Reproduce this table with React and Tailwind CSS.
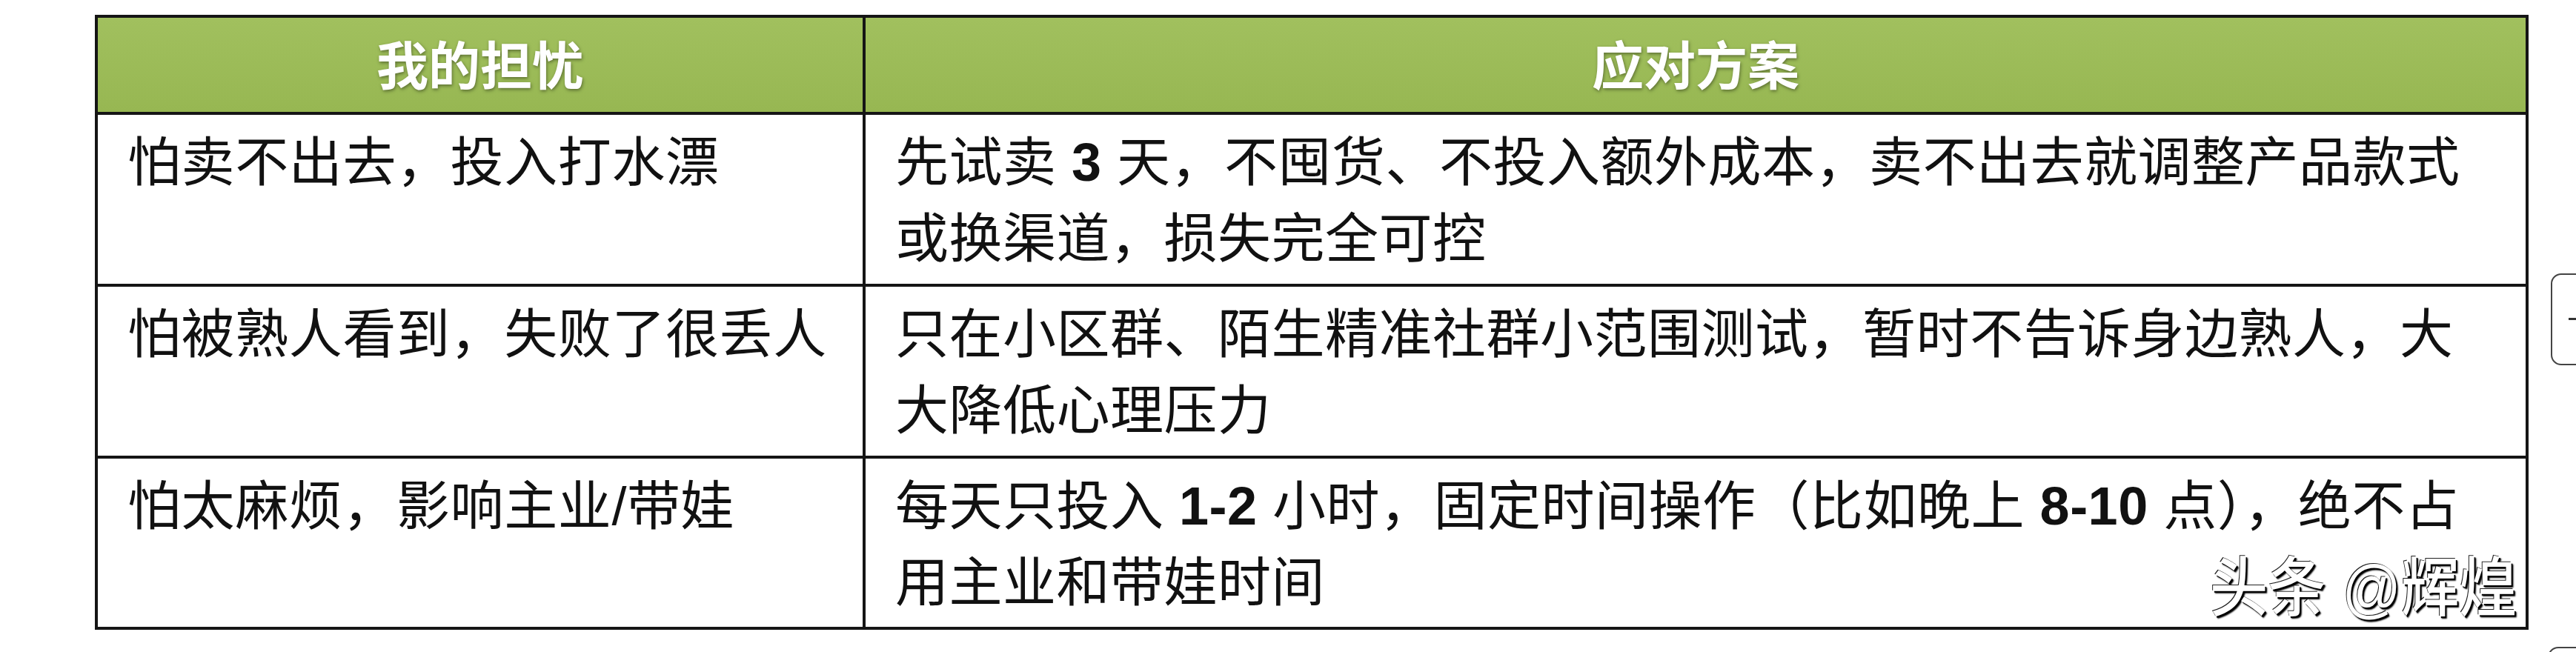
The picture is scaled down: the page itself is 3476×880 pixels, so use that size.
import React from "react";

const ROWS = [
  {
    worry: "怕卖不出去，投入打水漂",
    answer: [
      ["先试卖 ", <b key="a">3</b>, " 天，不囤货、不投入额外成本，卖不出去就调整产品款式"],
      ["或换渠道，损失完全可控"],
    ],
  },
  {
    worry: "怕被熟人看到，失败了很丢人",
    answer: [
      ["只在小区群、陌生精准社群小范围测试，暂时不告诉身边熟人，大"],
      ["大降低心理压力"],
    ],
  },
  {
    worry: "怕太麻烦，影响主业/带娃",
    answer: [
      ["每天只投入 ", <b key="a">1-2</b>, " 小时，固定时间操作（比如晚上 ", <b key="b">8-10</b>, " 点），绝不占"],
      ["用主业和带娃时间"],
    ],
  },
];

export default function App() {
  return (
    <div className="relative w-[3476px] h-[880px] overflow-hidden bg-white font-['Liberation_Sans','Noto_Sans_CJK_SC',sans-serif] text-[#111]">
      <div className="pt-[20px] pl-[128px]">
        {/* table */}
        <div className="w-[3284px] border-4 border-[#151515]">
          {/* header */}
          <div className="grid grid-cols-[1036px_1fr] h-[131px] border-b-4 border-[#151515] bg-gradient-to-b from-[#a1c05e] to-[#97b752]">
            <div className="flex items-center justify-center border-r-4 border-[#151515] pt-[6px] text-[70px] font-bold leading-none text-white [text-shadow:1px_2px_4px_rgba(40,50,20,0.55)]">
              我的担忧
            </div>
            <div className="flex items-center justify-center pt-[6px] text-[70px] font-bold leading-none text-white [text-shadow:1px_2px_4px_rgba(40,50,20,0.55)]">
              应对方案
            </div>
          </div>

          {ROWS.map((row, i) => (
            <div
              key={i}
              className={
                i < ROWS.length - 1
                  ? "grid grid-cols-[1036px_1fr] h-[232px] border-b-4 border-[#151515]"
                  : "grid grid-cols-[1036px_1fr] h-[227px]"
              }
            >
              <div className="border-r-4 border-[#151515] pl-[40px] pt-[13px] text-[72px] leading-[103px] tracking-[0.6px] whitespace-nowrap">
                {row.worry}
              </div>
              <div className="pl-[40px] pt-[13px] text-[72px] leading-[103px] tracking-[0.5px] whitespace-nowrap">
                {row.answer.map((line, j) => (
                  <div key={j}>{line}</div>
                ))}
              </div>
            </div>
          ))}
        </div>
      </div>

      {/* watermark */}
      <div className="absolute left-[2982px] top-[750px] origin-left scale-x-[0.89] text-[88px] font-medium leading-none whitespace-nowrap text-white [text-shadow:2px_2px_0_#000,3px_3px_2px_#000,-1px_-1px_0_#222]">
        头条 @辉煌
      </div>

      {/* side widgets cut off at the edge */}
      <div className="absolute left-[3442px] top-[369px] w-[60px] h-[124px] rounded-[14px] border-2 border-[#444] bg-white">
        <div className="mt-[58px] ml-[22px] h-[3px] w-[20px] bg-[#333]" />
      </div>
      <div className="absolute left-[3438px] top-[873px] w-[60px] h-[60px] rounded-[14px] border-2 border-[#444] bg-white" />
    </div>
  );
}
